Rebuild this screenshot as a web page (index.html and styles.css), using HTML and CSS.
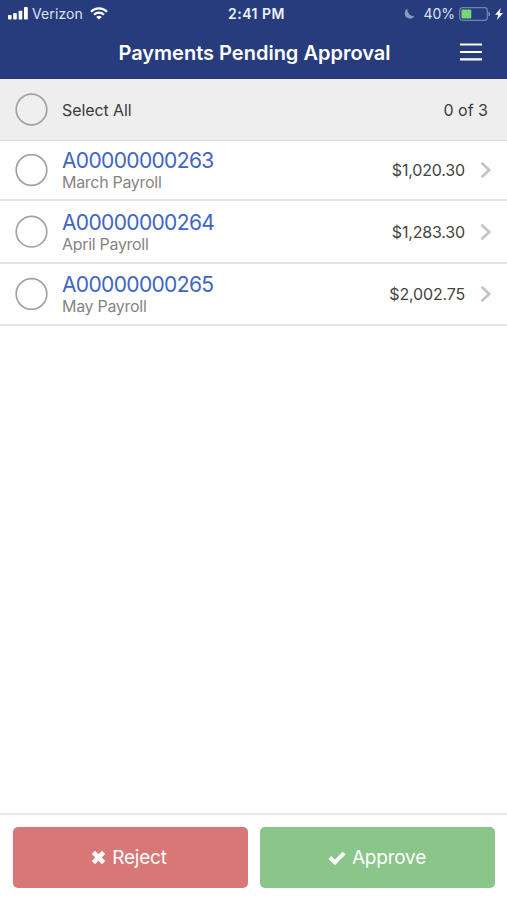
FILE: index.html
```html
<!DOCTYPE html>
<html lang="en">
<head>
<meta charset="utf-8">
<title>Payments Pending Approval</title>
<link rel="stylesheet" href="styles.css">
</head>
<body>
<div class="app">
  <header class="top">
    <div class="status">
      <div class="status-left">
        <svg class="signal" width="20" height="13" viewBox="0 0 20 13" fill="#fff"><rect x="0" y="8" width="3.6" height="4.5" rx=".8"/><rect x="5.2" y="6" width="3.6" height="6.5" rx=".8"/><rect x="10.6" y="3.7" width="3.7" height="8.8" rx=".8"/><rect x="16" y="0" width="3.8" height="12.5" rx=".8"/></svg>
        <span class="carrier">Verizon</span>
        <svg class="wifi" width="18" height="13" viewBox="0 0 18 13"><g fill="none" stroke="#fff" stroke-width="2.2"><path d="M1 4.7C5.5.2 12.500.2 17 4.700"/><path d="M4 7.800C6.900 5 11.100 5 14 7.800"/></g><path d="M9 12.600L6.200 9.900C7.800 8.500 10.200 8.500 11.800 9.900Z" fill="#fff"/></svg>
      </div>
      <span class="time">2:41 PM</span>
      <div class="status-right">
        <svg class="moon" width="11" height="12" viewBox="0 0 11 12"><path d="M3.200.5C1 2 .1 5 1.200 7.600C2.600 11.200 8.300 11.700 10.500 8.200C6.500 8.700 3.200 5 3.200.5Z" fill="#8d99c0"/></svg>
        <span class="percent">40%</span>
        <svg class="battery" width="32" height="14" viewBox="0 0 32 14"><rect x=".7" y=".7" width="27.600" height="12.600" rx="2.800" fill="none" stroke="#7583b0" stroke-width="1.200"/><rect x="2.500" y="2.400" width="9.800" height="9.200" rx="1" fill="#76d875"/><path d="M29.500 4.700C31.600 5.400 31.600 8.600 29.500 9.300Z" fill="#8d99c0"/></svg>
        <svg class="bolt" width="8" height="12" viewBox="0 0 8 12"><path d="M5.800 0L.1 6.800H3.200L2 12L8 4.900H4.700Z" fill="#fff"/></svg>
      </div>
    </div>
    <div class="nav">
      <h1>Payments Pending Approval</h1>
      <svg class="menu" width="22" height="18" viewBox="0 0 22 18"><path d="M0 1.500H22M0 9H22M0 16.300H22" stroke="#fff" stroke-width="2.200"/></svg>
    </div>
  </header>
  <main class="list">
    <div class="row select-all"><svg class="ring" width="33" height="33"><circle cx="16.500" cy="16.500" r="15.300"/></svg><span class="label">Select All</span><span class="count">0 of 3</span></div>
    <div class="row first"><svg class="ring" width="33" height="33"><circle cx="16.500" cy="16" r="15.300"/></svg><div class="info"><a class="number">A00000000263</a><span class="desc">March Payroll</span></div><span class="amount">$1,020.30</span><svg class="chevron" width="12" height="18" viewBox="0 0 12 18"><path d="M1.600 1.800L9.200 9L1.600 16.200"/></svg></div>
    <div class="row"><svg class="ring" width="33" height="33"><circle cx="16.500" cy="16.700" r="15.300"/></svg><div class="info"><a class="number">A00000000264</a><span class="desc">April Payroll</span></div><span class="amount">$1,283.30</span><svg class="chevron" width="12" height="18" viewBox="0 0 12 18"><path d="M1.600 1.800L9.200 9L1.600 16.200"/></svg></div>
    <div class="row"><svg class="ring" width="33" height="33"><circle cx="16.500" cy="17" r="15.300"/></svg><div class="info"><a class="number">A00000000265</a><span class="desc">May Payroll</span></div><span class="amount">$2,002.75</span><svg class="chevron" width="12" height="18" viewBox="0 0 12 18"><path d="M1.600 1.800L9.200 9L1.600 16.200"/></svg></div>
  </main>
  <footer class="actions">
    <div class="btn reject"><svg width="15" height="15" viewBox="0 0 14 14"><path d="M2.200 2.200L11.800 11.800M11.800 2.200L2.200 11.800" stroke="#fff" stroke-width="4.200"/></svg><span>Reject</span></div>
    <div class="btn approve"><svg width="18" height="14" viewBox="0 0 18 14"><path d="M1.800 6.500L6.900 11.400L16.100 2.200" fill="none" stroke="#fff" stroke-width="4"/></svg><span>Approve</span></div>
  </footer>
</div>
</body>
</html>
```

FILE: styles.css
```css
* { box-sizing: border-box; }
body { margin: 0; background: #fff; font-family: Inter, "Liberation Sans", sans-serif; }
.app { width: 507px; height: 900px; display: flex; flex-direction: column; }
svg { display: block; flex: none; }
.top { height: 79px; background: #273c7d; color: #fff; }
.status { height: 27px; display: grid; grid-template-columns: 1fr auto 1fr; align-items: center; padding: 0 5px 0 8px; }
.status-left, .status-right { display: flex; align-items: center; }
.status-right { justify-content: flex-end; }
.carrier { font-size: 14px; margin-left: 4px; letter-spacing: .1px; color: #dde2f2; }
.wifi { margin-left: 7px; }
.time { font-size: 14px; font-weight: 600; letter-spacing: .5px; margin-left: 3px; color: #eef1fb; }
.moon { margin-right: 8px; }
.percent { font-size: 14px; color: #dde2f2; }
.battery { margin-left: 4px; }
.bolt { margin-left: 4px; margin-right: -1px; }
.nav { height: 52px; position: relative; display: flex; align-items: center; justify-content: center; padding-left: 2px; }
h1 { margin: 0; font-size: 20px; line-height: 24px; font-weight: 600; white-space: nowrap; }
.menu { position: absolute; right: 25px; top: 16px; }
.list { flex: 1; }
.row { height: 62.300px; display: flex; align-items: center; padding: 0 15px; border-bottom: 2px solid #e4e4e4; }
.row.first { height: 60.400px; }
.row.select-all { height: 62px; background: #eee; border-bottom: 1px solid #dcdcdc; color: #3b3b3b; font-size: 16px; }
.ring circle { fill: #fff; stroke: #a2a2a2; stroke-width: 1.700; }
.select-all .ring circle { fill: #efefef; }
.label { margin-left: 14px; letter-spacing: -.1px; }
.count { margin-left: auto; padding-right: 4px; }
.info { margin-left: 14px; display: flex; flex-direction: column; white-space: nowrap; }
.row:not(.first) .info { padding-top: 2px; }
.number { color: #4065c6; font-size: 21px; line-height: 24px; letter-spacing: -.64px; }
.desc { color: #858585; font-size: 16px; line-height: 19px; letter-spacing: -.3px; }
.amount { margin-left: auto; color: #444; font-size: 16px; letter-spacing: -.17px; }
.chevron { margin-left: 15px; }
.chevron path { fill: none; stroke: #c5c5c5; stroke-width: 2.800; }
.actions { height: 87px; border-top: 2px solid #e8e8e8; padding: 12px 12px 12px 13px; display: grid; grid-template-columns: 1fr 1fr; gap: 12px; }
.btn { height: 61px; border-radius: 5px; color: #fff; font-size: 19px; letter-spacing: -.2px; display: flex; align-items: center; justify-content: center; gap: 6px; }
.reject { background: #d87876; padding-right: 3px; }
.approve { background: #8ac68a; padding-right: 1px; }
```
